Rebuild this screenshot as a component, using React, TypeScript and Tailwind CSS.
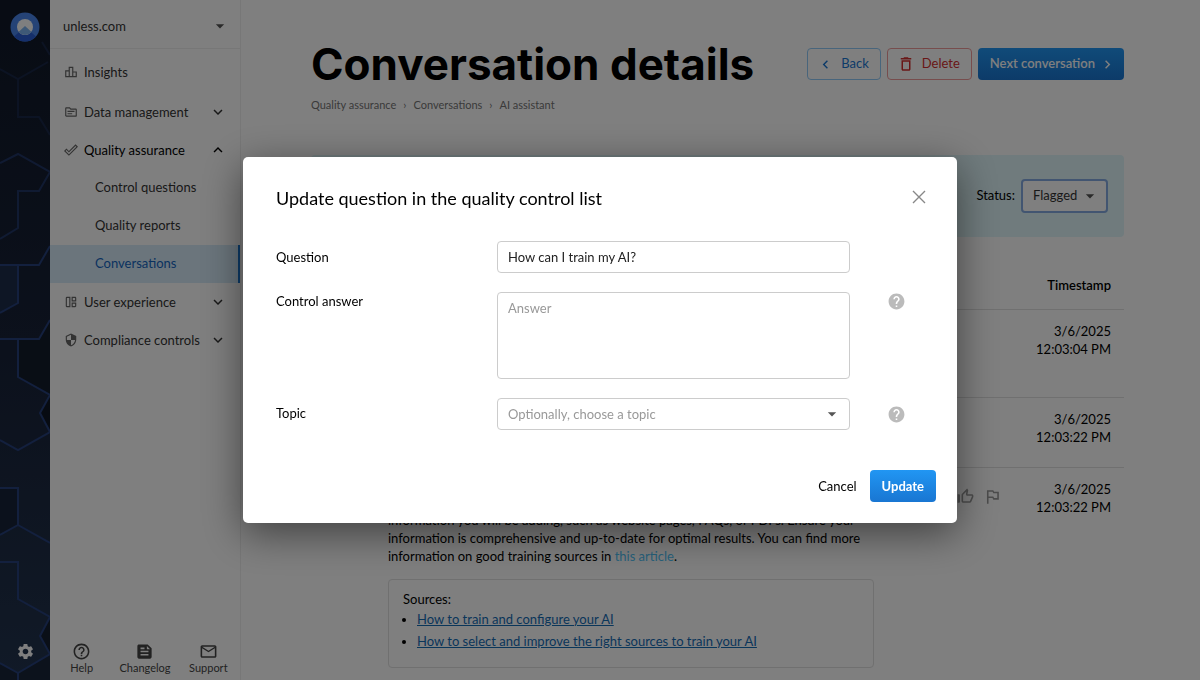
import React from "react";
import {
  MdArrowDropDown,
  MdChevronLeft,
  MdChevronRight,
  MdDeleteOutline,
  MdDoneOutline,
  MdExpandLess,
  MdExpandMore,
  MdFeed,
  MdHelp,
  MdHelpOutline,
  MdMailOutline,
  MdOutlineAutoAwesomeMosaic,
  MdOutlineLeaderboard,
  MdOutlineTopic,
  MdOutlinedFlag,
  MdSecurity,
  MdSettings,
  MdThumbUpOffAlt,
} from "react-icons/md";

const RailPattern = () => (
  <svg
    className="absolute inset-0 h-full w-full"
    viewBox="0 0 50 680"
    preserveAspectRatio="xMinYMin slice"
    fill="none"
    aria-hidden="true"
  >
    <path d="M0 265H18V303L0 313Z" fill="#1e3050" fillOpacity=".8" />
    <path d="M18 340V377L50 395V320L39 339Z" fill="#131c2a" />
    <path d="M50 395L40 413L50 432Z" fill="#0f1724" />
    <path d="M0 488H18V525L0 535Z" fill="#172338" />
    <path d="M50 617L40 636L50 654Z" fill="#141e2e" />
    <path d="M0 663L18 673L50 654V680H0Z" fill="#182538" />
    <g stroke="#26407c" strokeWidth="2">
      <path strokeOpacity=".35" d="M0 69L18 79L48 62M18 79V117H39L50 135M42 42L50 55" />
      <path strokeOpacity=".7" d="M0 163L18 154L50 172L39 191H18V228L0 239" />
      <path d="M50 246L39 265H0M18 265V303L0 313" />
      <path d="M50 320L39 339H0M18 339V377L50 395L40 413L50 432L18 450L0 440" />
      <path d="M0 488H18V525L50 543M18 525L0 535" />
      <path d="M0 562H18V599L50 617L40 636L50 654L18 673V680M18 673L0 663" />
    </g>
  </svg>
);

const Logo = () => (
  <svg width="30" height="30" viewBox="0 0 30 30" aria-hidden="true">
    <circle cx="15" cy="15" r="14.5" fill="#4a86ec" />
    <path d="M15 15L4 24.500A14.500 14.500 0 0 0 26 24.500Z" fill="#2a5fd6" />
    <circle cx="15" cy="15" r="8" fill="#fff" />
    <path d="M15 14L8.500 20A8.500 8.500 0 0 0 21.500 20Z" fill="#7db2ee" />
  </svg>
);

const Rail = () => (
  <div className="relative flex w-[50px] shrink-0 flex-col items-center justify-between overflow-hidden bg-linear-to-b from-[#101828] via-[#182238] to-[#22344f] pt-3 pb-[19px]">
    <RailPattern />
    <a href="#home" aria-label="Home" className="relative">
      <Logo />
    </a>
    <button type="button" aria-label="Settings" className="relative text-white">
      <MdSettings size={19} />
    </button>
  </div>
);

interface NavItemProps {
  icon: React.ReactNode;
  label: string;
  chevron?: "up" | "down";
}

const NavItem = ({ icon, label, chevron }: NavItemProps) => (
  <button
    type="button"
    className={`flex h-[38px] w-full items-center pr-[13px] pl-[14px] text-left ${
      chevron === "up" ? "text-black" : "text-[#333]"
    }`}
  >
    <span className="mr-[6px] text-[#666]">{icon}</span>
    <span className="flex-1">{label}</span>
    {chevron === "up" && <MdExpandLess size={18} />}
    {chevron === "down" && <MdExpandMore size={18} />}
  </button>
);

const Sidebar = () => (
  <nav className="flex w-[191px] shrink-0 flex-col border-r border-[#eee] text-[13px] leading-5">
    <div className="relative flex h-[49px] items-center border-b border-[#eee] pt-[3px]">
      <select aria-label="Website" className="w-full appearance-none pl-[13px] text-[#333]">
        <option>unless.com</option>
      </select>
      <MdArrowDropDown size={20} className="pointer-events-none absolute right-[10px] text-[#555]" />
    </div>
    <div className="flex flex-col pt-1">
      <NavItem icon={<MdOutlineLeaderboard size={14} />} label="Insights" />
      <div className="pt-[2px]">
        <NavItem icon={<MdOutlineTopic size={14} />} label="Data management" chevron="down" />
      </div>
      <NavItem icon={<MdDoneOutline size={14} />} label="Quality assurance" chevron="up" />
      <a href="#control" className="flex h-[38px] items-center pb-[2px] pl-[45px] text-[#333]">
        Control questions
      </a>
      <a href="#reports" className="flex h-[38px] items-center pb-[2px] pl-[45px] text-[#333]">
        Quality reports
      </a>
      <a
        href="#conversations"
        className="flex h-[38px] items-center border-r-2 border-[#1976d2] bg-[#d6ebf9] pb-[2px] pl-[45px] text-[#1565c0]"
      >
        Conversations
      </a>
      <NavItem icon={<MdOutlineAutoAwesomeMosaic size={14} />} label="User experience" chevron="down" />
      <NavItem icon={<MdSecurity size={14} />} label="Compliance controls" chevron="down" />
    </div>
    <div className="mt-auto grid grid-cols-3 pb-[5px] text-[11px] leading-[14px] text-[#444]">
      <a href="#help" className="flex flex-col items-center">
        <MdHelpOutline size={19} />
        Help
      </a>
      <a href="#changelog" className="flex flex-col items-center">
        <MdFeed size={19} />
        Changelog
      </a>
      <a href="#support" className="flex flex-col items-center">
        <MdMailOutline size={19} />
        Support
      </a>
    </div>
  </nav>
);

const Header = () => (
  <header className="flex items-start justify-between">
    <div>
      <h1 className="font-[Inter,sans-serif] text-[44px] leading-[54px] font-bold whitespace-nowrap">
        Conversation details
      </h1>
      <div className="mt-[6px] flex gap-[7px] text-[11px] leading-4 text-[#757575]">
        <a href="#quality">Quality assurance</a>
        <span>›</span>
        <a href="#list">Conversations</a>
        <span>›</span>
        <span>AI assistant</span>
      </div>
    </div>
    <div className="mt-[11px] flex gap-[6px] text-[13px]">
      <button
        type="button"
        className="flex h-8 items-center gap-[7px] rounded border border-[#90caf9] pr-[11px] pl-[9px] text-[#1976d2]"
      >
        <MdChevronLeft size={17} />
        Back
      </button>
      <button
        type="button"
        className="flex h-8 items-center gap-[7px] rounded border border-[#ef9a9a] pr-[11px] pl-[9px] text-[#d32f2f]"
      >
        <MdDeleteOutline size={18} />
        Delete
      </button>
      <button
        type="button"
        className="flex h-8 items-center gap-1 rounded bg-linear-to-b from-[#2196f3] to-[#1976d2] pr-2 pl-3 font-semibold text-white"
      >
        Next conversation
        <MdChevronRight size={17} />
      </button>
    </div>
  </header>
);

const StatusBar = () => (
  <div className="mt-[42px] flex h-[82px] items-center justify-end gap-[6px] rounded bg-[#e0f7fa] pr-4 text-[13px]">
    <label htmlFor="status">Status:</label>
    <div className="relative flex items-center">
      <select
        id="status"
        defaultValue="Flagged"
        className="h-[34px] w-[87px] appearance-none rounded border-2 border-[#84aae2] bg-white pl-[10px] text-[#333]"
      >
        <option>Flagged</option>
      </select>
      <MdArrowDropDown size={20} className="pointer-events-none absolute right-2 text-[#555]" />
    </div>
  </div>
);

const Timestamp = ({ time }: { time: string }) => (
  <td className="w-[110px] pr-[13px] text-right align-top">
    3/6/2025
    <br />
    {time}
  </td>
);

const Messages = () => (
  <table className="mt-[25px] w-full border-collapse text-[13px] leading-[18px]">
    <thead>
      <tr className="h-[47px] border-b border-[#e0e0e0]">
        <th colSpan={3} scope="col" className="pr-[13px] text-right font-semibold">
          Timestamp
        </th>
      </tr>
    </thead>
    <tbody>
      <tr className="h-[88px] border-b border-[#e0e0e0] [&>td]:pt-3">
        <td colSpan={2} />
        <Timestamp time="12:03:04 PM" />
      </tr>
      <tr className="h-[70px] border-b border-[#e0e0e0] [&>td]:pt-3">
        <td colSpan={2} />
        <Timestamp time="12:03:22 PM" />
      </tr>
      <tr className="[&>td]:pt-3">
        <td className="pl-[77px] align-top">
          <p className="max-w-[486px] pt-[31px]">
            information you will be adding, such as website pages, FAQs, or PDFs. Ensure your
            <br />
            information is comprehensive and up-to-date for optimal results. You can find more
            <br />
            information on good training sources in{" "}
            <a href="#article" className="text-[#4fc3f7]">this article</a>.
          </p>
          <div className="mt-[14px] max-w-[486px] rounded border border-[#e0e0e0] px-[14px] pt-[10px] pb-[15px]">
            Sources:
            <ul className="list-disc pl-[14px] leading-[22px] text-black">
              <li>
                <a href="#source-1" className="text-[#156cb5] underline">
                  How to train and configure your AI
                </a>
              </li>
              <li>
                <a href="#source-2" className="text-[#156cb5] underline">
                  How to select and improve the right sources to train your AI
                </a>
              </li>
            </ul>
          </div>
        </td>
        <td className="w-[60px] align-top">
          <div className="flex justify-end gap-2 pt-[7px] pr-3 text-[#999]">
            <button type="button" aria-label="Good answer">
              <MdThumbUpOffAlt size={19} />
            </button>
            <button type="button" aria-label="Flag answer">
              <MdOutlinedFlag size={19} />
            </button>
          </div>
        </td>
        <Timestamp time="12:03:22 PM" />
      </tr>
    </tbody>
  </table>
);

const UpdateDialog = () => (
  <form
    role="dialog"
    aria-labelledby="dialog-title"
    className="w-full max-w-[714px] rounded-[5px] bg-white pt-[25px] pr-[21px] pb-[21px] pl-[33px] text-[13px] leading-[18px] shadow-[0_10px_40px_rgba(0,0,0,0.5)]"
  >
    <div className="flex items-center justify-between pr-[10px]">
      <h2 id="dialog-title" className="text-[18px] leading-8">
        Update question in the quality control list
      </h2>
      <button type="button" aria-label="Close" className="pb-[2px] text-[#888]">
        <svg width="14" height="14" viewBox="0 0 14 14" stroke="currentColor" strokeWidth="1.4" aria-hidden="true">
          <path d="M1 1L13 13M13 1L1 13" />
        </svg>
      </button>
    </div>
    <div className="mt-[27px] grid grid-cols-[221fr_353fr_86fr] gap-y-[19px]">
      <label htmlFor="question" className="pt-[7px]">Question</label>
      <input
        id="question"
        type="text"
        defaultValue="How can I train my AI?"
        className="h-8 w-full rounded border border-[#ccc] px-[10px] text-[#222]"
      />
      <span />
      <label htmlFor="answer">Control answer</label>
      <textarea
        id="answer"
        placeholder="Answer"
        className="h-[87px] w-full resize-none rounded border border-[#ccc] px-[10px] py-[6px] placeholder:text-[#999]"
      />
      <MdHelp size={19} className="ml-[37px] text-[#bbb]" />
      <label htmlFor="topic" className="pt-[6px]">Topic</label>
      <div className="relative flex items-center">
        <select
          id="topic"
          className="h-8 w-full appearance-none rounded border border-[#ccc] px-[10px] pb-px text-[#999]"
        >
          <option>Optionally, choose a topic</option>
        </select>
        <MdArrowDropDown size={20} className="pointer-events-none absolute right-2 text-[#555]" />
      </div>
      <MdHelp size={19} className="ml-[37px] self-center text-[#bbb]" />
    </div>
    <div className="mt-10 flex items-center justify-end gap-[13px]">
      <button type="button">Cancel</button>
      <button
        type="submit"
        className="h-8 rounded bg-linear-to-b from-[#2196f3] to-[#1976d2] px-3 font-bold text-white"
      >
        Update
      </button>
    </div>
  </form>
);

const App = () => {
  return (
    <div className="flex h-screen overflow-hidden bg-white font-[Lato,sans-serif] text-black">
      <Rail />
      <Sidebar />
      <main className="min-w-0 flex-1 overflow-hidden pt-[37px] pr-[76px] pl-[70px]">
        <Header />
        <StatusBar />
        <Messages />
      </main>
      <div className="fixed inset-0 flex items-center justify-center bg-black/50">
        <UpdateDialog />
      </div>
    </div>
  );
};

export default App;
